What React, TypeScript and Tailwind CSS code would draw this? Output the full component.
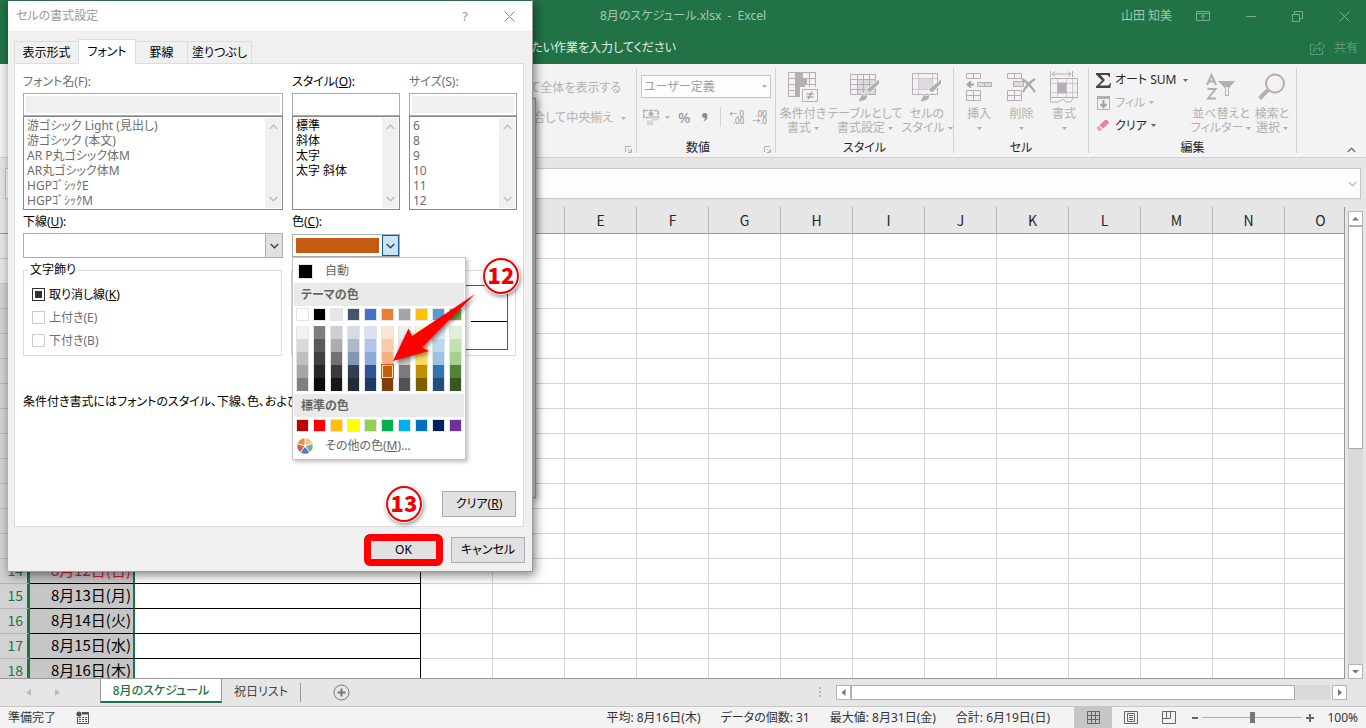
import type { ReactNode } from "react";
import { clsx } from "clsx";

const COLUMNS = "ABCDEFGHIJKLMNO".split("");
const WEEKDAYS = ["水", "木", "金", "土", "日", "月", "火"];
const ROWS = Array.from({ length: 18 }, (_, i) => i + 1);

const THEME_COLORS = [
  ["#ffffff", "#f2f2f2", "#d9d9d9", "#bfbfbf", "#a6a6a6", "#7f7f7f"],
  ["#000000", "#7f7f7f", "#595959", "#3f3f3f", "#262626", "#0c0c0c"],
  ["#e7e6e6", "#d0cece", "#aeabab", "#757070", "#3a3838", "#171616"],
  ["#44546a", "#d6dce4", "#adb9ca", "#8496b0", "#323f4f", "#222a35"],
  ["#4472c4", "#d9e2f3", "#b4c6e7", "#8eaadb", "#2f5496", "#1f3864"],
  ["#ed7d31", "#fbe5d5", "#f7cbac", "#f4b183", "#c55a11", "#833c0b"],
  ["#a5a5a5", "#ededed", "#dbdbdb", "#c9c9c9", "#7b7b7b", "#525252"],
  ["#ffc000", "#fff2cc", "#fee599", "#ffd965", "#bf9000", "#7f6000"],
  ["#5b9bd5", "#deebf6", "#bdd7ee", "#9cc3e5", "#2e75b5", "#1e4e79"],
  ["#70ad47", "#e2efd9", "#c5e0b3", "#a8d08d", "#538135", "#375623"],
];

const STANDARD_COLORS = [
  "#c00000", "#ff0000", "#ffc000", "#ffff00", "#92d050",
  "#00b050", "#00b0f0", "#0070c0", "#002060", "#7030a0",
];

function Caret({ className = "text-[#b1b1b1]" }: { className?: string }) {
  return (
    <svg className={clsx("inline-block shrink-0", className)} width="5" height="3" viewBox="0 0 5 3" aria-hidden="true">
      <path d="M0 0h5L2.5 3z" fill="currentColor" />
    </svg>
  );
}

function Chevron({ up = false, className }: { up?: boolean; className?: string }) {
  return (
    <svg className={className} width="9" height="6" viewBox="0 0 9 6" fill="none" stroke="currentColor" aria-hidden="true">
      <path d={up ? "M.7 5L4.5 1.2 8.3 5" : "M.7 1L4.5 4.8 8.3 1"} strokeWidth="1.4" />
    </svg>
  );
}

function TitleBar() {
  return (
    <header className="h-16 shrink-0 bg-[#217346] text-[#a6c7b5]">
      <div className="flex h-8 items-center">
        <span className="flex-1 text-center">8月のスケジュール.xlsx&nbsp; -&nbsp; Excel</span>
        <div className="absolute right-0 flex h-8 items-center">
          <span className="mr-6">山田 知美</span>
          <button aria-label="リボンの表示オプション" className="mr-9">
            <svg width="14" height="12" viewBox="0 0 14 12" fill="none" stroke="#7aab90">
              <path d="M.5 1.5h13v9H.5zM.5 3.5h13M7 10V5M4.8 7L7 4.8 9.2 7" />
            </svg>
          </button>
          <button aria-label="最小化" className="mr-9">
            <svg width="10" height="11" viewBox="0 0 10 11"><path d="M0 5.5h10" stroke="#7aab90" /></svg>
          </button>
          <button aria-label="元に戻す" className="mr-9">
            <svg width="11" height="11" viewBox="0 0 11 11" fill="none" stroke="#7aab90">
              <path d="M.5 3.5h7v7h-7zM2.5 3V.5h8v7H8" />
            </svg>
          </button>
          <button aria-label="閉じる" className="mr-4">
            <svg width="11" height="11" viewBox="0 0 11 11" stroke="#7aab90"><path d="M.5.5l10 10M10.5.5l-10 10" /></svg>
          </button>
        </div>
      </div>
      <div className="flex h-8 items-center justify-between pr-2">
        <span className="w-[676px] text-right text-[#e3eee8]">実行したい作業を入力してください</span>
        <button className="flex items-center gap-2 text-[#5f9a7a]">
          <svg width="16" height="14" viewBox="0 0 16 14" fill="none" stroke="currentColor">
            <path d="M4 3.500H.5v10h12V9.500M9.500 1l5.500 4.500-5.500 4V7C6.500 7 4.500 8 3.500 10.500 3.800 6.500 5.500 4 9.500 3.800z" />
          </svg>
          共有
        </button>
      </div>
    </header>
  );
}

function Launcher() {
  return (
    <svg className="absolute right-1 bottom-0" width="7" height="7" viewBox="0 0 7 7" fill="none" stroke="#b1b1b1" aria-hidden="true">
      <path d="M.5 6V.5H6M3 3l3 3M6.500 3v3.500H3" />
    </svg>
  );
}

function Group({ label, width, launcher = false, children }: { label: string; width: string; launcher?: boolean; children: ReactNode }) {
  return (
    <section className={clsx("relative flex shrink-0 flex-col border-r border-[#d2d2d2]", width)}>
      <div className="min-h-0 flex-1">{children}</div>
      <div className={clsx("text-center leading-[10px] text-[#262626]", launcher && "pr-4")}>{label}</div>
      {launcher && <Launcher />}
    </section>
  );
}

function BigButton({ icon, lines, width }: { icon: ReactNode; lines: string[]; width: string }) {
  return (
    <button className={clsx("flex shrink-0 flex-col items-center pt-[2px] leading-[14px] text-[#b1b1b1]", width)}>
      <span className="mb-1 flex h-[33px] items-center">{icon}</span>
      <span className="whitespace-nowrap">{lines[0]}</span>
      <span className="flex min-h-[14px] items-center gap-[3px] whitespace-nowrap">
        {lines[1]}
        <Caret />
      </span>
    </button>
  );
}

const line = "#b3afb3";
const pale = "#f6f0f6";

function Brush() {
  return (
    <>
      <path d="M29.500 6.500v5L20 21l-4-3.500z" fill="#b1b1b1" stroke="#f3f3f3" />
      <path d="M7 29.500c3-1 2.500-6 6-8 3-1 5 1 4.500 3.500-1 3.500-5 5-10.500 4.500z" fill="#b1b1b1" stroke="#f3f3f3" />
      <path d="M13 24c1-1 2.500-1 3 0" stroke="#f3f3f3" fill="none" />
    </>
  );
}

function ConditionalIcon() {
  return (
    <svg width="30" height="31" viewBox="0 0 30 31" fill="none">
      <path d="M.5 1.500h27v24H.5z" fill={pale} stroke={line} />
      <path d="M.5 7.500h27M.5 13.500h27M.5 19.500h27M7.500 1v24M14.500 1v24M21.500 1v24" stroke={line} />
      <path d="M8 2h6v5H8zM8 8h11v5H8zM8 14h9v5H8zM8 20h6v5H8z" fill="#b1b1b1" />
      <path d="M13.500 17.500h16v13h-16z" fill={pale} stroke="#f3f3f3" strokeWidth="3" />
      <path d="M14.500 18.500h15v12h-15z" fill={pale} stroke={line} />
      <path d="M18.500 23h7M18.500 26h7M24 20.500l-4 8" stroke="#8f8f8f" />
    </svg>
  );
}

function TableStyleIcon() {
  return (
    <svg width="30" height="30" viewBox="0 0 30 30" fill="none">
      <path d="M.5 2.500h25v20H.5z" fill={pale} />
      <path d="M7 8h18v14H7z" fill="#dedade" />
      <path d="M.5 2.500h25v20H.5zM.5 7.500h25M.5 12.500h25M.5 17.500h25M7.500 2v20M13.500 2v20M19.500 2v20" stroke={line} />
      <Brush />
    </svg>
  );
}

function CellStyleIcon() {
  return (
    <svg width="30" height="30" viewBox="0 0 30 30" fill="none">
      <path d="M.5 1.500h25v21H.5z" fill={pale} stroke={line} />
      <path d="M1 6.500h24M1 17.500h24M6.500 2v20M20.500 2v20" stroke="#cbc7cb" />
      <path d="M7 7h13v10H7z" fill="#dedade" />
      <Brush />
    </svg>
  );
}

function InsertIcon() {
  return (
    <svg width="26" height="28" viewBox="0 0 26 28" fill={pale} stroke={line}>
      <path d="M.5.5h14v5H.5zM7.500.5v5M.5 17.500h14v10H.5zM.5 22.500h14M7.500 17.500v10" />
      <path d="M11.500 9.500h14v4h-14zM18.500 9.500v4" fill="#dedade" />
      <path d="M1.500 11.500H8M5 8.500l-3.500 3 3.500 3" fill="none" stroke="#a5a5a5" strokeWidth="2" />
    </svg>
  );
}

function DeleteIcon() {
  return (
    <svg width="30" height="28" viewBox="0 0 30 28" fill={pale} stroke={line}>
      <path d="M.5.5h14v5H.5zM7.500.5v5M.5 17.500h14v10H.5zM.5 22.500h14M7.500 17.500v10" />
      <path d="M6.500 8.500h10v5h-10z" fill="#dedade" />
      <path d="M15 6c5 3 9 7 13 13M28 6c-5 3-9 7-12 13" fill="none" stroke="#aaa" strokeWidth="2.200" />
    </svg>
  );
}

function FormatIcon() {
  return (
    <svg width="28" height="32" viewBox="0 0 28 32" fill="none" stroke={line}>
      <path d="M.5 0v6M22.500 0v6M2 3h19M5 .5L2 3l3 2.500M18 .5L21 3l-3 2.500" />
      <path d="M.5 7.500h27v19H.5z" fill={pale} />
      <path d="M1 12.500h26M1 21.500h26M7.500 8v18M16.500 8v18M22.500 8v18" stroke="#cbc7cb" />
      <path d="M8 12h8v10H8z" fill="#b1b1b1" />
      <path d="M.5 27v4h8l4-3 4 3h4l3-4" />
    </svg>
  );
}

function Ribbon() {
  return (
    <div className="flex h-[94px] shrink-0 border-b border-[#d2d2d2] bg-[#f3f3f3] pt-1 pb-1 text-[#b1b1b1]">
      <section className="relative flex w-[637px] shrink-0 flex-col items-end border-r border-[#d2d2d2]">
        <div className="mt-[10px] pr-[15px] leading-5 whitespace-nowrap">折り返して全体を表示する</div>
        <div className="mt-[10px] flex items-center gap-2 pr-[10px] leading-5 whitespace-nowrap">
          セルを結合して中央揃え <Caret />
        </div>
        <Launcher />
      </section>

      <Group label="数値" width="w-[139px]" launcher>
        <div className="relative mx-1 mt-[7px] flex items-center">
          <select aria-label="表示形式" className="h-[23px] w-full appearance-none border border-[#c6c6c6] bg-[#fdfdfd] px-[2px] text-[#a0a0a0]">
            <option>ユーザー定義</option>
          </select>
          <Caret className="absolute right-1 text-[#b1b1b1]" />
        </div>
        <div className="mt-[7px] flex h-6 items-center pl-[6px]">
          <svg width="16" height="16" viewBox="0 0 16 16" fill="none" stroke="#b1b1b1">
            <path d="M.8 1.500h14.400v7H.8z" strokeWidth="1.600" strokeDasharray="4 1" />
            <circle cx="8" cy="5" r="2" fill="#b1b1b1" />
            <path d="M9 8h6M9 10.500h6M4 12.500h6M4 15h6" stroke="#d8cdd8" strokeWidth="2" />
          </svg>
          <Caret className="ml-[6px] text-[#b1b1b1]" />
          <button className="ml-2 text-[15px] text-[#8c8c8c]">%</button>
          <svg className="ml-3" width="6" height="9" viewBox="0 0 6 9">
            <path d="M0 2.500a2.700 2.500 0 0 1 5.500 0C5.500 6 4 8 1 8.500c1.500-1.300 2-2.500 1.800-3.500C1 5 0 4 0 2.500z" fill="#8c8c8c" />
          </svg>
          <span className="ml-3 h-5 border-l border-[#d2d2d2]" />
          <button className="ml-2 flex flex-col items-end text-[8px] leading-[7px] text-[#8c8c8c]"><span>←.0</span><span>.00</span></button>
          <button className="ml-2 flex flex-col items-end text-[8px] leading-[7px] text-[#8c8c8c]"><span>.00</span><span>→.0</span></button>
        </div>
      </Group>

      <Group label="スタイル" width="w-[178px]">
        <div className="flex pl-[2px]">
          <BigButton icon={<ConditionalIcon />} lines={["条件付き", "書式"]} width="w-[50px]" />
          <BigButton icon={<TableStyleIcon />} lines={["テーブルとして", "書式設定"]} width="w-[74px]" />
          <BigButton icon={<CellStyleIcon />} lines={["セルの", "スタイル"]} width="w-[50px]" />
        </div>
      </Group>

      <Group label="セル" width="w-[135px]">
        <div className="flex pl-1">
          <BigButton icon={<InsertIcon />} lines={["挿入", ""]} width="w-[42px]" />
          <BigButton icon={<DeleteIcon />} lines={["削除", ""]} width="w-[43px]" />
          <BigButton icon={<FormatIcon />} lines={["書式", ""]} width="w-[42px]" />
        </div>
      </Group>

      <Group label="編集" width="w-[208px]">
        <div className="flex pl-[7px]">
          <div className="flex w-[95px] shrink-0 flex-col pt-px text-[#262626]">
            <button className="flex h-[22px] items-center">
              <svg className="mr-1 shrink-0" width="15" height="15" viewBox="0 0 15 15">
                <path d="M0 0h14v4h-1.200c-.2-1.500-.8-2-2.500-2H4.500L9 7l-5.500 5.500h8c1.500 0 2-.8 2.500-2.500h1l-.7 5H0v-1.500L6 7.600 0 1.500z" fill="#444" />
              </svg>
              <span className="whitespace-nowrap">オート SUM</span>
              <Caret className="ml-[7px] text-[#666]" />
            </button>
            <button className="flex h-[23px] items-center text-[#b1b1b1]">
              <svg className="mr-1 shrink-0" width="15" height="16" viewBox="0 0 15 16" fill="none" stroke="#b1b1b1">
                <path d="M1.500 1.500h12v13h-12z" fill={pale} />
                <path d="M1 1h13v3H1z" fill="#b1b1b1" stroke="none" />
                <path d="M7.500 5v7M4.500 9l3 3 3-3" strokeWidth="2" stroke="#a0a0a0" />
              </svg>
              フィル
              <Caret className="ml-1 text-[#b1b1b1]" />
            </button>
            <button className="flex h-[23px] items-center">
              <svg className="mr-1 shrink-0" width="15" height="14" viewBox="0 0 15 14">
                <path d="M9 1c1-1 4 1 4 3l-6 5.500L3.500 6z" fill="#e8829a" />
                <path d="M2.800 6.700L6.300 10.200 4.500 12C3 12.500.8 10 1 8.500z" fill="#f0a2b3" />
              </svg>
              クリア
              <Caret className="ml-1 text-[#666]" />
            </button>
          </div>
          <BigButton
            width="w-[60px]"
            lines={["並べ替えと", "フィルター"]}
            icon={
              <svg width="30" height="28" viewBox="0 0 30 28" fill="none" stroke="#b1b1b1" strokeWidth="2">
                <path d="M1 12L5.500 2 10 12M3 8.500h5M1.500 16h8L2 25.500h8" />
                <path d="M12 8h17l-6 7v8h-4v-8z" fill="#b1b1b1" stroke="none" />
                <path d="M21 14v8" stroke={pale} />
              </svg>
            }
          />
          <BigButton
            width="w-[42px]"
            lines={["検索と", "選択"]}
            icon={
              <svg width="28" height="28" viewBox="0 0 28 28" fill="none" stroke="#b1b1b1">
                <path d="M10 17L1.500 25.500" strokeWidth="4" />
                <circle cx="17" cy="10.500" r="9" fill={pale} strokeWidth="2" />
              </svg>
            }
          />
        </div>
      </Group>

      <button aria-label="リボンを折りたたむ" className="mt-auto mr-[10px] ml-auto text-[#777]">
        <Chevron up />
      </button>
    </div>
  );
}

function FormulaBar() {
  return (
    <div className="flex h-[49px] shrink-0 gap-2 bg-[#e6e6e6] pt-[10px] pr-[5px] pb-2 pl-[5px]">
      <input aria-label="名前ボックス" className="w-[120px] border border-[#c6c6c6] bg-[#fdfdfd]" />
      <div className="relative flex flex-1 items-center">
        <input aria-label="数式バー" className="h-full w-full border border-[#c6c6c6] bg-[#fdfdfd]" />
        <Chevron className="absolute right-1 text-[#c0c0c0]" />
      </div>
    </div>
  );
}

function dateFor(row: number) {
  const day = row - 2;
  if (day < 1 || day > 31) return "";
  return `8月${day}日(${WEEKDAYS[(day - 1) % 7]})`;
}

function Sheet() {
  return (
    <div className="min-h-0 flex-1 overflow-hidden border-r border-b border-[#999] bg-white">
      <table className="w-[1357px] table-fixed border-separate border-spacing-0 bg-white font-['Noto_Sans_CJK_JP',sans-serif] text-[15px] leading-[22px]">
        <colgroup>
          <col className="w-[30px]" />
          <col className="w-[105px]" />
          <col className="w-[286px]" />
          {COLUMNS.slice(2).map((c) => (
            <col key={c} className="w-[72px]" />
          ))}
        </colgroup>
        <thead>
          <tr className="h-[27px]">
            <th className="border-b border-[#999] bg-[#e6e6e6]" />
            {COLUMNS.map((c) => (
              <th key={c} className="border-r border-b border-r-[#b5b5b5] border-b-[#999] bg-[#e6e6e6] p-0 text-[14px] font-normal text-[#262626]">
                {c}
              </th>
            ))}
          </tr>
        </thead>
        <tbody>
          {ROWS.map((row) => {
            const selected = row > 2;
            const sunday = WEEKDAYS[(row - 3 + 7) % 7] === "日";
            return (
              <tr key={row} className="h-[25px]">
                <th
                  className={clsx(
                    "border-b p-0 pr-1 pb-[2px] text-right text-[14px] font-normal",
                    selected ? "border-r-3 border-r-[#217346] border-b-[#b5b5b5] bg-[#d2d2d2] text-[#217346]" : "border-r border-[#c6c6c6] bg-[#e6e6e6]",
                  )}
                >
                  {row}
                </th>
                <td
                  className={clsx(
                    "border-b p-0 pr-[2px] pb-[2px] text-right",
                    selected ? "border-r-2 border-r-[#217346] border-b-black bg-[#c6c6c6]" : "border-r border-[#d4d4d4]",
                    sunday ? "text-[#e0143c]" : "text-black",
                  )}
                >
                  {dateFor(row)}
                </td>
                <td className="border-r border-b border-black p-0" />
                {COLUMNS.slice(2).map((c) => (
                  <td key={c} className="border-r border-b border-[#d4d4d4] p-0" />
                ))}
              </tr>
            );
          })}
        </tbody>
      </table>
    </div>
  );
}

function ScrollButton({ d, label }: { d: string; label: string }) {
  return (
    <button aria-label={label} className="flex size-[15px] shrink-0 items-center justify-center border border-[#b5b5b5] bg-white">
      <svg width="7" height="7" viewBox="0 0 7 7"><path d={d} fill="#777" /></svg>
    </button>
  );
}

function SheetTabs() {
  return (
    <nav className="flex h-[27px] shrink-0 bg-[#e6e6e6] text-[#444]">
      <div className="flex w-[100px] items-center gap-6 pl-[26px]">
        <svg width="5" height="7" viewBox="0 0 5 7"><path d="M5 0v7L0 3.500z" fill="#bcbcbc" /></svg>
        <svg width="5" height="7" viewBox="0 0 5 7"><path d="M0 0v7l5-3.500z" fill="#bcbcbc" /></svg>
      </div>
      <button className="mb-[3px] w-[122px] border-x border-b-2 border-x-[#999] border-b-[#217346] bg-white pt-[2px] font-medium text-[#217346]">8月のスケジュール</button>
      <button className="mt-1 mb-1 w-[79px] border-r border-[#999] pb-px">祝日リスト</button>
      <button aria-label="新しいシート" className="ml-8">
        <svg width="17" height="17" viewBox="0 0 17 17" fill="none" stroke="#777">
          <circle cx="8.500" cy="8.500" r="7.500" />
          <path d="M8.500 4.500v8M4.500 8.500h8" strokeWidth="2" />
        </svg>
      </button>
      <div className="mr-[19px] ml-auto flex w-[529px] items-center">
        <svg className="mr-[14px]" width="4" height="11" viewBox="0 0 4 11"><path d="M1 0h2v2H1zM1 4h2v2H1zM1 8h2v2H1z" fill="#b5b5b5" /></svg>
        <ScrollButton label="左へ" d="M5.500 0v7L1.500 3.500z" />
        <div className="mr-[2px] flex h-[15px] flex-1 bg-[#dadada]">
          <div className="w-[444px] border border-[#ababab] bg-white" />
        </div>
        <ScrollButton label="右へ" d="M2 0v7l4-3.500z" />
      </div>
    </nav>
  );
}

function StatusBar() {
  return (
    <footer className="flex h-[22px] shrink-0 items-center border-t border-[#c6c6c6] bg-[#f3f3f3] text-[#333]">
      <span className="pl-2">準備完了</span>
      <svg className="ml-5" width="13" height="13" viewBox="0 0 13 13" fill="none" stroke="#555">
        <path d="M1.500 6v6.500h11v-11H6" />
        <path d="M6 2.500h6" strokeWidth="2" />
        <path d="M3 6.500h8M3 8.500h8M3 10.500h8" strokeDasharray="2 1" />
        <circle cx="3" cy="3" r="2.600" fill="#555" stroke="none" />
      </svg>
      <div className="mr-6 ml-auto flex gap-5 whitespace-nowrap">
        <span>平均: 8月16日(木)</span>
        <span>データの個数: 31</span>
        <span>最大値: 8月31日(金)</span>
        <span>合計: 6月19日(日)</span>
      </div>
      <button aria-label="標準" className="flex h-full w-[38px] items-center justify-center bg-[#c6c6c6]">
        <svg width="13" height="13" viewBox="0 0 13 13" fill="none" stroke="#666"><path d="M.5.5h12v12H.5zM4.500.5v12M8.500.5v12M.5 4.500h12M.5 8.500h12" /></svg>
      </button>
      <button aria-label="ページ レイアウト" className="flex h-full w-[38px] items-center justify-center">
        <svg width="14" height="13" viewBox="0 0 14 13" fill="none" stroke="#666"><path d="M.5.5h13v12H.5zM3.500 2.500h7v8h-7zM5 4.500h4M5 6.500h4M5 8.500h4" /></svg>
      </button>
      <button aria-label="改ページ プレビュー" className="flex h-full w-[38px] items-center justify-center">
        <svg width="14" height="13" viewBox="0 0 14 13" fill="none" stroke="#666"><path d="M.5.5h13v12H.5zM4.500.5v7M8.500.5v7M.5 7.500h8" /></svg>
      </button>
      <button aria-label="縮小" className="ml-1 h-[2px] w-[6px] bg-[#666]" />
      <input
        type="range"
        aria-label="ズーム"
        defaultValue={50}
        className="mx-1 h-3 w-[100px] appearance-none bg-[linear-gradient(#b1b1b1,#b1b1b1)] bg-[length:100%_1px] bg-center bg-no-repeat [&::-webkit-slider-thumb]:h-[11px] [&::-webkit-slider-thumb]:w-[5px] [&::-webkit-slider-thumb]:appearance-none [&::-webkit-slider-thumb]:bg-[#777]"
      />
      <button aria-label="拡大">
        <svg width="8" height="8" viewBox="0 0 8 8"><path d="M4 0v8M0 4h8" stroke="#666" strokeWidth="2" /></svg>
      </button>
      <span className="w-[52px] pr-2 text-right">100%</span>
    </footer>
  );
}

type ListFieldProps = { id: string; label: ReactNode; items: string[]; width: string; disabled?: boolean };

function ListField({ id, label, items, width, disabled = false }: ListFieldProps) {
  return (
    <div className={clsx("flex shrink-0 flex-col", width, disabled ? "text-[#6d6d6d]" : "text-black")}>
      <label htmlFor={id} className="mb-px leading-5">{label}</label>
      <input
        id={id}
        disabled={disabled}
        className={clsx("h-[23px] w-full border border-[#abadb3] bg-clip-content p-[2px]", disabled ? "bg-[#f0f0f0]" : "bg-white")}
      />
      <div className="flex h-[94px] border border-[#828790] p-px">
        <ul role="listbox" className="flex-1 pl-[2px] leading-[15px] whitespace-nowrap">
          {items.map((item) => (
            <li key={item} role="option" aria-selected="false">{item}</li>
          ))}
        </ul>
        <div className="flex w-4 flex-col items-center justify-between bg-[#f0f0f0] py-[6px] text-[#bfbfbf]">
          <Chevron up />
          <Chevron />
        </div>
      </div>
    </div>
  );
}

function CheckOption({ id, children, disabled = false, checked = false }: { id: string; children: ReactNode; disabled?: boolean; checked?: boolean }) {
  return (
    <div className={clsx("flex h-[23px] items-center gap-1", disabled ? "text-[#6d6d6d]" : "text-black")}>
      <input
        id={id}
        type="checkbox"
        disabled={disabled}
        defaultChecked={checked}
        className="size-[13px] appearance-none border border-[#333] bg-white bg-clip-content p-[2px] checked:bg-[#333] disabled:border-[#ccc]"
      />
      <label htmlFor={id}>{children}</label>
    </div>
  );
}

function Swatch({ color }: { color: string }) {
  return <button aria-label={color} className="size-[13px] border border-[#e2e4e7]" style={{ backgroundColor: color }} />;
}

function ColorMenu() {
  return (
    <div className="absolute top-[256px] left-[284px] w-[174px] border border-[#c6c6c6] bg-white p-px pb-0 text-[#666] shadow-[2px_2px_4px_rgba(0,0,0,0.25)]">
      <button className="flex h-6 w-full items-center gap-3 pl-1">
        <span className="size-[15px] border border-[#e2e4e7] bg-black" />
        自動
      </button>
      <div className="h-[23px] bg-[#eaeaea] pl-[7px] leading-[23px] font-semibold">テーマの色</div>
      <div className="flex gap-1 px-[2px] pt-[2px] pb-[3px]">
        {THEME_COLORS.map((shades) => (
          <div key={shades[0]} className="flex flex-col">
            <Swatch color={shades[0]} />
            <div className="mt-[5px] flex flex-col border-x border-[#e2e4e7]">
              {shades.slice(1).map((c) => (
                <button
                  key={c}
                  aria-label={c}
                  className={clsx("h-[13px] w-full", c === "#c55a11" && "border border-[#ffe294] outline outline-[#f04a16]")}
                  style={{ backgroundColor: c }}
                />
              ))}
            </div>
          </div>
        ))}
      </div>
      <div className="h-[23px] bg-[#eaeaea] pl-[7px] leading-[23px] font-semibold">標準の色</div>
      <div className="flex gap-1 px-[2px] pt-[2px]">
        {STANDARD_COLORS.map((c) => (
          <Swatch key={c} color={c} />
        ))}
      </div>
      <button className="flex h-[27px] w-full items-center gap-3 pl-[3px]">
        <svg width="16" height="16" viewBox="0 0 16 16" stroke="#fff" strokeWidth=".8">
          <path d="M8 8V0a8 8 0 0 1 7.600 5.500z" fill="#ecc27e" />
          <path d="M8 8l7.600-2.500a8 8 0 0 1-2.900 9z" fill="#7fa89a" />
          <path d="M8 8l4.700 6.500a8 8 0 0 1-9.400 0z" fill="#4a7fc0" />
          <path d="M8 8l-4.700 6.500a8 8 0 0 1-2.900-9z" fill="#d2604a" />
          <path d="M8 8L.4 5.500A8 8 0 0 1 8 0z" fill="#e59140" />
          <circle cx="8" cy="8" r="1" fill="#fff" />
        </svg>
        <span>その他の色(<u>M</u>)...</span>
      </button>
    </div>
  );
}

function Badge({ children, className }: { children: string; className: string }) {
  return (
    <div className={clsx("absolute flex size-[38px] rounded-full bg-white p-px shadow-[1px_2px_4px_rgba(0,0,0,0.4)]", className)}>
      <div className="flex flex-1 items-center justify-center rounded-full border-2 border-[#f00000] bg-white pb-1 font-['Noto_Sans_CJK_JP',sans-serif] text-[22px] leading-none font-black text-[#f00000]">
        {children}
      </div>
    </div>
  );
}

function FormatDialog() {
  return (
    <div role="dialog" aria-label="セルの書式設定" className="absolute top-0 left-2 w-[525px] border border-l-0 border-[#9a9a9a] border-t-[#2f6b4a] bg-[#f0f0f0] shadow-[2px_3px_10px_rgba(0,0,0,0.5)]">
      <div className="flex h-[30px] items-center bg-white pl-2 text-[#999]">
        <span className="flex-1">セルの書式設定</span>
        <button aria-label="ヘルプ" className="mr-9 text-[13px]">?</button>
        <button aria-label="閉じる" className="mr-[17px]">
          <svg width="11" height="11" viewBox="0 0 11 11" stroke="#888"><path d="M.5.5l10 10M10.500.5l-10 10" /></svg>
        </button>
      </div>

      <div className="pt-2 pr-[7px] pl-[6px] text-black">
        <div role="tablist" className="relative z-10 -mb-px flex items-end">
          <button role="tab" className="h-[23px] w-[64px] border border-r-0 border-[#dcdcdc]">表示形式</button>
          <button role="tab" aria-selected="true" className="h-[25px] w-[58px] border border-b-0 border-[#dcdcdc] bg-white">フォント</button>
          <button role="tab" className="h-[23px] w-[52px] border border-l-0 border-[#dcdcdc]">罫線</button>
          <button role="tab" className="h-[23px] w-[64px] border border-l-0 border-[#dcdcdc]">塗りつぶし</button>
        </div>

        <div className="mr-px flex h-[464px] flex-col border border-[#dcdcdc] bg-white pt-2 pr-[7px] pl-2">
          <div className="flex gap-[9px]">
            <ListField
              id="font-name"
              width="w-[260px]"
              disabled
              label="フォント名(F):"
              items={["游ゴシック Light (見出し)", "游ゴシック (本文)", "AR P丸ゴシック体M", "AR丸ゴシック体M", "HGPｺﾞｼｯｸE", "HGPｺﾞｼｯｸM"]}
            />
            <ListField id="font-style" width="w-[108px]" label={<>スタイル(<u>O</u>):</>} items={["標準", "斜体", "太字", "太字 斜体"]} />
            <ListField id="font-size" width="w-[108px]" disabled label="サイズ(S):" items={["6", "8", "9", "10", "11", "12"]} />
          </div>

          <div className="mt-[2px] flex gap-[9px]">
            <div className="w-[260px]">
              <label htmlFor="underline" className="block leading-5">下線(<u>U</u>):</label>
              <div className="relative mt-px flex h-[25px]">
                <select id="underline" className="w-full appearance-none border border-[#abadb3] bg-white" />
                <span className="pointer-events-none absolute inset-y-0 right-0 flex w-[18px] items-center justify-center border border-[#abadb3] bg-[#e1e1e1] text-[#444]">
                  <Chevron />
                </span>
              </div>
            </div>
            <div className="w-[108px]">
              <label htmlFor="font-color" className="block leading-5">色(<u>C</u>):</label>
              <button id="font-color" className="mt-[2px] flex h-[23px] w-full border border-[#abadb3] bg-white">
                <span className="m-[3px] flex-1 self-stretch bg-[#c55a11]" />
                <span className="flex h-full w-[17px] items-center justify-center border border-[#0a5a9c] bg-[#cce4f7] text-[#444]">
                  <Chevron />
                </span>
              </button>
            </div>
          </div>

          <div className="mt-1 flex gap-[9px]">
            <fieldset className="h-[94px] w-[259px] border border-[#dcdcdc] pl-2">
              <legend className="-ml-1 px-[2px] leading-4">文字飾り</legend>
              <div className="pt-[5px]">
                <CheckOption id="strike" checked>取り消し線(<u>K</u>)</CheckOption>
                <CheckOption id="superscript" disabled>上付き(E)</CheckOption>
                <CheckOption id="subscript" disabled>下付き(B)</CheckOption>
              </div>
            </fieldset>
            <fieldset className="h-[94px] w-[225px] border border-[#dcdcdc] px-[7px]">
              <legend className="px-[2px] leading-4">プレビュー</legend>
              <div className="mt-[7px] flex h-[65px] items-center justify-end border border-[#555]">
                <span className="mt-2 w-9 border-b border-black" />
              </div>
            </fieldset>
          </div>

          <p className="mt-9 leading-5 whitespace-nowrap">条件付き書式にはフォントのスタイル、下線、色、および取り消し線が設定できます。</p>
          <button className="mt-auto mb-[9px] h-[26px] w-[74px] self-end border border-[#adadad] bg-[#e1e1e1]">クリア(<u>R</u>)</button>
        </div>

        <div className="flex items-center justify-end gap-2 pt-[7px] pb-[5px]">
          <button className="h-8 w-[79px] rounded-md border-[7px] border-[#f00] bg-[#e1e1e1] leading-[18px]">OK</button>
          <button className="h-[26px] w-[74px] border border-[#adadad] bg-[#e1e1e1]">キャンセル</button>
        </div>
      </div>

      <ColorMenu />
      <Badge className="top-[256px] left-[474px]">12</Badge>
      <Badge className="top-[484px] left-[377px]">13</Badge>
      <svg className="pointer-events-none absolute top-[285px] left-[380px] drop-shadow-[2px_2px_2px_rgba(0,0,0,0.45)]" width="94" height="82" viewBox="0 0 94 82">
        <path d="M87 8L34 61.500l7 3.500L5 75 20.500 42.500l3.500 7.500z" fill="#f00" />
      </svg>
    </div>
  );
}

export default function App() {
  return (
    <div className="relative flex h-screen flex-col overflow-hidden bg-[#e6e6e6] font-['Noto_Sans','Noto_Sans_CJK_JP',sans-serif] text-[12px] leading-4 [font-feature-settings:'palt']">
      <TitleBar />
      <Ribbon />
      <FormulaBar />
      <main className="flex min-h-0 flex-1">
        <Sheet />
        <div className="mr-[3px] ml-[3px] flex w-[15px] flex-col pt-1">
          <ScrollButton label="上へ" d="M0 5.500h7L3.500 2z" />
          <div className="flex min-h-0 flex-1 flex-col bg-[#dadada]">
            <div className="h-[51%] border border-[#ababab] bg-white" />
          </div>
          <ScrollButton label="下へ" d="M0 2h7L3.500 5.500z" />
        </div>
      </main>
      <SheetTabs />
      <StatusBar />

      <div className="absolute top-[98px] left-5 h-[400px] w-[516px] border border-[#999] bg-[#d8d8d8] shadow-[2px_2px_6px_rgba(0,0,0,0.3)]" />
      <FormatDialog />
    </div>
  );
}
